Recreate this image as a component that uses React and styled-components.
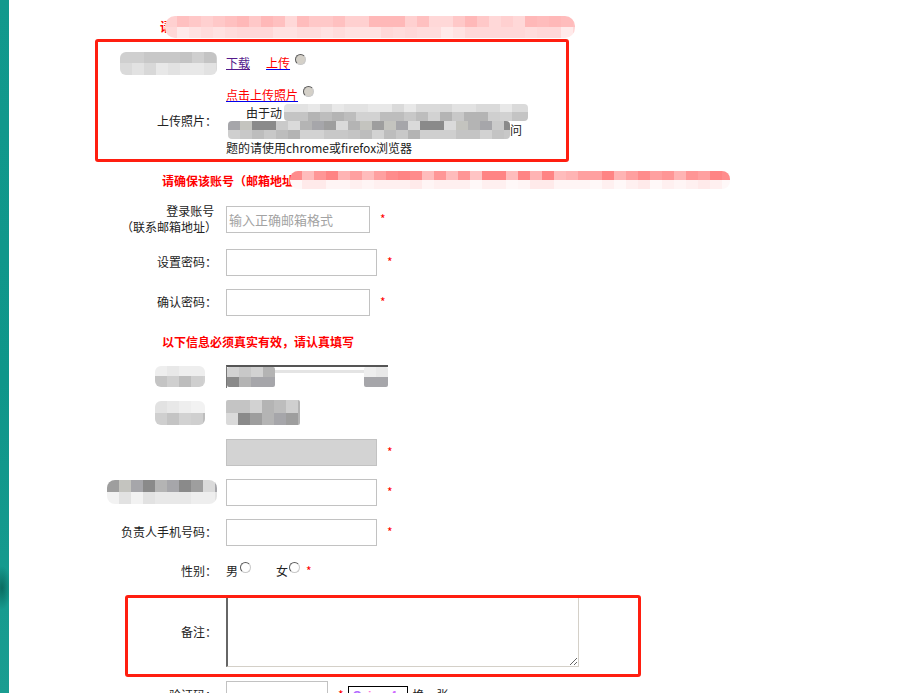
import React from 'react'
import styled, { createGlobalStyle } from 'styled-components'

const GlobalStyle = createGlobalStyle`
  html, body {
    margin: 0;
    padding: 0;
    background: #fff;
    overflow: hidden;
  }
  body {
    font-family: "Noto Sans CJK SC", "Microsoft YaHei", sans-serif;
    font-size: 12px;
    color: #222;
  }
`

// palettes for the privacy mosaics
const PINK_TOP = ['#ffc8c8', '#ffc0c0', '#ffd0d0', '#ffbcbc', '#ffd8d8', '#ffb8b8']
const PINK_LOW = ['#ffd8d8', '#ffe2e2', '#ffdcdc', '#ffeaea']
const RED_TOP = ['#ff8c8c', '#ffa0a0', '#ffb4b4', '#ff9696', '#ffc4c4', '#ff8484', '#ffbcbc']
const RED_LOW = ['#fff0f0', '#fff5f5', '#ffeaea', '#fff8f8']
const GRAY_TOP = ['#cfcfcf', '#c4c4c4', '#bdbdbd', '#b4b4b4', '#c8c8c8', '#d2d2d2']
const GRAY_LOW = ['#dadada', '#e2e2e2', '#e8e8e8', '#d8d8d8']
const GRAY_DARK = ['#a6a6aa', '#c4c4bf', '#9e9e9e', '#dadada', '#b4b4b4', '#8a8a8a', '#cacaca']
const GRAY_LIGHT = ['#e8e8e8', '#eeeeee', '#e2e2e2', '#f2f2f2']

function pick(palette, i, seed) {
  const n = Math.abs(Math.sin((i + 1) * 12.9898 + seed * 78.233) * 43758.5453)
  return palette[Math.floor((n - Math.floor(n)) * palette.length)]
}

function Mosaic({ w, h, rows, cell = 12, seed = 1, radius = 6, ml = 0 }) {
  const cols = Math.ceil(w / cell)
  return (
    <MosaicBox $w={w} $h={h} $r={radius} $ml={ml}>
      {rows.map((pal, r) => (
        <MosaicRow key={r}>
          {Array.from({ length: cols }, (_, c) => (
            <Cell key={c} $cell={cell} style={{ background: pick(pal, r * cols + c, seed) }} />
          ))}
        </MosaicRow>
      ))}
    </MosaicBox>
  )
}

function App() {
  return (
    <Page>
      <GlobalStyle />
      <Sidebar />
      <Main>
        <TopNote>
          <RedText>请</RedText>
          <Mosaic w={410} h={22} rows={[PINK_TOP, PINK_LOW]} seed={3} ml={-7} radius={10} />
        </TopNote>

        <Row $h={24} $mt={12}>
          <Label>
            <Mosaic w={97} h={23} rows={[GRAY_TOP, GRAY_LOW]} seed={5} />
          </Label>
          <InlineField>
            <Visited>下载</Visited>
            <Link $ml={16}><Red>上传</Red></Link>
            <Radio $ml={5} $disabled />
          </InlineField>
        </Row>

        <Row $h={70} $mt={11}>
          <Label>上传照片：</Label>
          <div>
            <Line>
              <Link><Red>点击上传照片</Red></Link>
              <Radio $ml={5} $disabled />
            </Line>
            <Line>
              <Indent>由于动</Indent>
              <Mosaic w={244} h={17} rows={[GRAY_LOW, GRAY_TOP]} seed={9} ml={2} radius={4} />
            </Line>
            <Line>
              <Mosaic w={282} h={18} rows={[GRAY_DARK, GRAY_TOP]} seed={11} ml={2} radius={4} />
              问
            </Line>
            <Line>题的请使用chrome或firefox浏览器</Line>
          </div>
        </Row>

        <Heading $mt={15}>
          请确保该账号（邮箱地址
          <Mosaic w={440} h={18} rows={[RED_TOP, RED_LOW]} seed={7} ml={-4} radius={8} />
        </Heading>

        <Row $h={40} $mt={10}>
          <Label>
            登录账号{'\u00a0'}<br />（联系邮箱地址）
          </Label>
          <Field>
            <Input $w={144} placeholder="输入正确邮箱格式" />
            <Star>*</Star>
          </Field>
        </Row>

        <Row $h={40} $mt={3}>
          <Label>设置密码：</Label>
          <Field>
            <Input $w={151} type="password" />
            <Star>*</Star>
          </Field>
        </Row>

        <Row $h={40}>
          <Label>确认密码：</Label>
          <Field>
            <Input $w={144} type="password" />
            <Star>*</Star>
          </Field>
        </Row>

        <Heading $mt={10}>以下信息必须真实有效，请认真填写</Heading>

        <Row $h={40} $mt={6}>
          <Label $pr={12}>
            <Mosaic w={50} h={21} rows={[GRAY_LIGHT, GRAY_TOP]} seed={13} />
          </Label>
          <Field>
            <SelectBox>
              <Mosaic w={48} h={20} rows={[GRAY_TOP, GRAY_DARK]} seed={15} radius={2} />
              <SelectStrip />
              <Mosaic w={24} h={20} rows={[GRAY_LIGHT, GRAY_DARK]} seed={17} radius={2} />
            </SelectBox>
          </Field>
        </Row>

        <Row $h={33}>
          <Label $pr={12}>
            <Mosaic w={50} h={24} rows={[GRAY_LIGHT, GRAY_TOP]} seed={19} />
          </Label>
          <Field>
            <Mosaic w={74} h={25} rows={[GRAY_TOP, GRAY_DARK]} seed={21} radius={2} />
          </Field>
        </Row>

        <Row $h={40} $mt={3}>
          <Label />
          <Field>
            <Input $w={151} $disabled disabled />
            <Star>*</Star>
          </Field>
        </Row>

        <Row $h={40}>
          <Label>
            <Mosaic w={110} h={24} rows={[GRAY_DARK, GRAY_LIGHT]} seed={23} radius={8} />
          </Label>
          <Field>
            <Input $w={151} />
            <Star>*</Star>
          </Field>
        </Row>

        <Row $h={40}>
          <Label>负责人手机号码：</Label>
          <Field>
            <Input $w={151} />
            <Star>*</Star>
          </Field>
        </Row>

        <Row $h={38}>
          <Label>性别：</Label>
          <InlineField>
            男<Radio $ml={2} />
            <Gap />
            女<Radio $ml={1} />
            <Star $inline>*</Star>
          </InlineField>
        </Row>

        <Row $h={71} $mt={6}>
          <Label>备注：</Label>
          <Field>
            <Remark />
          </Field>
        </Row>

        <Row $h={35} $mt={10}>
          <Label>验证码：</Label>
          <Field>
            <Input $w={102} />
            <Star>*</Star>
            <Captcha>
              <b style={{ color: '#b36bff' }}>Q</b>
              <b style={{ color: '#ff7ad9' }}>i</b>
              <b style={{ color: '#7a7aff' }}>x</b>
              <b style={{ color: '#d06bff' }}>4</b>
            </Captcha>
            <Refresh>换一张</Refresh>
          </Field>
        </Row>
      </Main>

      <Highlight $left={95} $top={39} $w={474} $h={123} />
      <Highlight $left={125} $top={595} $w={516} $h={82} />
    </Page>
  )
}

export default App

const Page = styled.div`
  position: relative;
  display: flex;
  height: 693px;
  overflow: hidden;
  background: #fff;
`

const Sidebar = styled.div`
  width: 9px;
  flex-shrink: 0;
  background:
    radial-gradient(ellipse 9px 22px at 2px 588px, rgba(0, 70, 60, 0.55), transparent),
    linear-gradient(#12998d, #0f968a 55%, #1a9d91);
`

const Main = styled.div`
  flex: 1;
  min-width: 0;
`

const TopNote = styled.div`
  display: flex;
  align-items: center;
  height: 24px;
  padding: 15px 0 0 151px;
  line-height: 18px;
`

const RedText = styled.span`
  color: #f00;
  font-weight: bold;
`

const MosaicBox = styled.span`
  display: inline-flex;
  flex-direction: column;
  flex-shrink: 0;
  width: ${(p) => p.$w}px;
  height: ${(p) => p.$h}px;
  margin-left: ${(p) => p.$ml}px;
  border-radius: ${(p) => p.$r}px;
  overflow: hidden;
  vertical-align: top;
  filter: blur(0.4px);
`

const MosaicRow = styled.span`
  display: flex;
  flex: 1;
`

const Cell = styled.span`
  width: ${(p) => p.$cell}px;
  flex-shrink: 0;
`

const Row = styled.div`
  display: grid;
  grid-template-columns: 208px 1fr;
  column-gap: 9px;
  align-items: center;
  height: ${(p) => p.$h}px;
  margin-top: ${(p) => p.$mt || 0}px;
`

const Label = styled.div`
  display: flex;
  flex-direction: column;
  align-items: flex-end;
  justify-content: center;
  text-align: right;
  line-height: 16px;
  white-space: nowrap;
  padding-right: ${(p) => p.$pr || 0}px;
`

const Field = styled.div`
  display: flex;
  align-items: center;
`

const InlineField = styled.div`
  line-height: 18px;
  white-space: nowrap;
`

const Line = styled.div`
  height: 17.5px;
  line-height: 17.5px;
  white-space: nowrap;
`

const Indent = styled.span`
  padding-left: 20px;
`

const Link = styled.a`
  color: #0000ee;
  text-decoration: underline;
  cursor: pointer;
  margin-left: ${(p) => p.$ml || 0}px;
`

const Visited = styled(Link)`
  color: #551a8b;
`

const Red = styled.span`
  color: #f00;
`

const Radio = styled.span`
  display: inline-block;
  box-sizing: border-box;
  width: 11px;
  height: 11px;
  margin-left: ${(p) => p.$ml || 0}px;
  border-radius: 50%;
  border: 1px solid;
  border-color: #5a5a5a #c8c8c8 #c8c8c8 #5a5a5a;
  background: ${(p) => (p.$disabled ? '#d4d0c8' : '#fff')};
  vertical-align: 3px;
`

const Gap = styled.span`
  display: inline-block;
  width: 25px;
`

const Heading = styled.div`
  display: flex;
  align-items: center;
  height: 18px;
  margin-top: ${(p) => p.$mt || 0}px;
  padding-left: 153px;
  color: #f00;
  font-weight: bold;
  white-space: nowrap;
`

const Input = styled.input`
  box-sizing: border-box;
  width: ${(p) => p.$w}px;
  height: 27px;
  margin: 0;
  padding: 0 2px;
  border: 1px solid #c2c2c2;
  background: ${(p) => (p.$disabled ? '#d3d3d3' : '#fff')};
  font-family: inherit;
  font-size: 13px;
  color: #222;
  outline: none;

  &::placeholder {
    color: #a3a3a3;
  }
`

const Star = styled.span`
  color: #f00;
  margin-left: ${(p) => (p.$inline ? 6 : 10)}px;
  font-size: 12px;
  line-height: 12px;
`

const SelectBox = styled.div`
  box-sizing: border-box;
  display: flex;
  align-items: flex-start;
  width: 162px;
  height: 23px;
  border-top: 2px solid #555;
  border-left: 1px solid #777;
`

const SelectStrip = styled.span`
  flex: 1;
  height: 3px;
  margin-top: 3px;
  background: #e4e4e4;
`

const Remark = styled.textarea`
  box-sizing: border-box;
  width: 353px;
  height: 71px;
  margin: 0;
  border-style: solid;
  border-width: 1px 1px 1px 2px;
  border-color: #666 #d4d0c8 #d4d0c8 #666;
  font-family: inherit;
  font-size: 12px;
  outline: none;
`

const Captcha = styled.span`
  display: inline-flex;
  align-items: center;
  gap: 6px;
  box-sizing: border-box;
  width: 60px;
  height: 20px;
  margin-left: 4px;
  padding: 0 4px;
  border: 1px solid #000;
  font-family: "Liberation Sans", sans-serif;
  font-size: 12px;
  align-self: flex-end;
  margin-bottom: 2px;
`

const Refresh = styled.span`
  margin-left: 5px;
`

const Highlight = styled.div`
  position: absolute;
  left: ${(p) => p.$left}px;
  top: ${(p) => p.$top}px;
  width: ${(p) => p.$w}px;
  height: ${(p) => p.$h}px;
  box-sizing: border-box;
  border: 3px solid #ff1e10;
  border-radius: 3px;
  pointer-events: none;
`
